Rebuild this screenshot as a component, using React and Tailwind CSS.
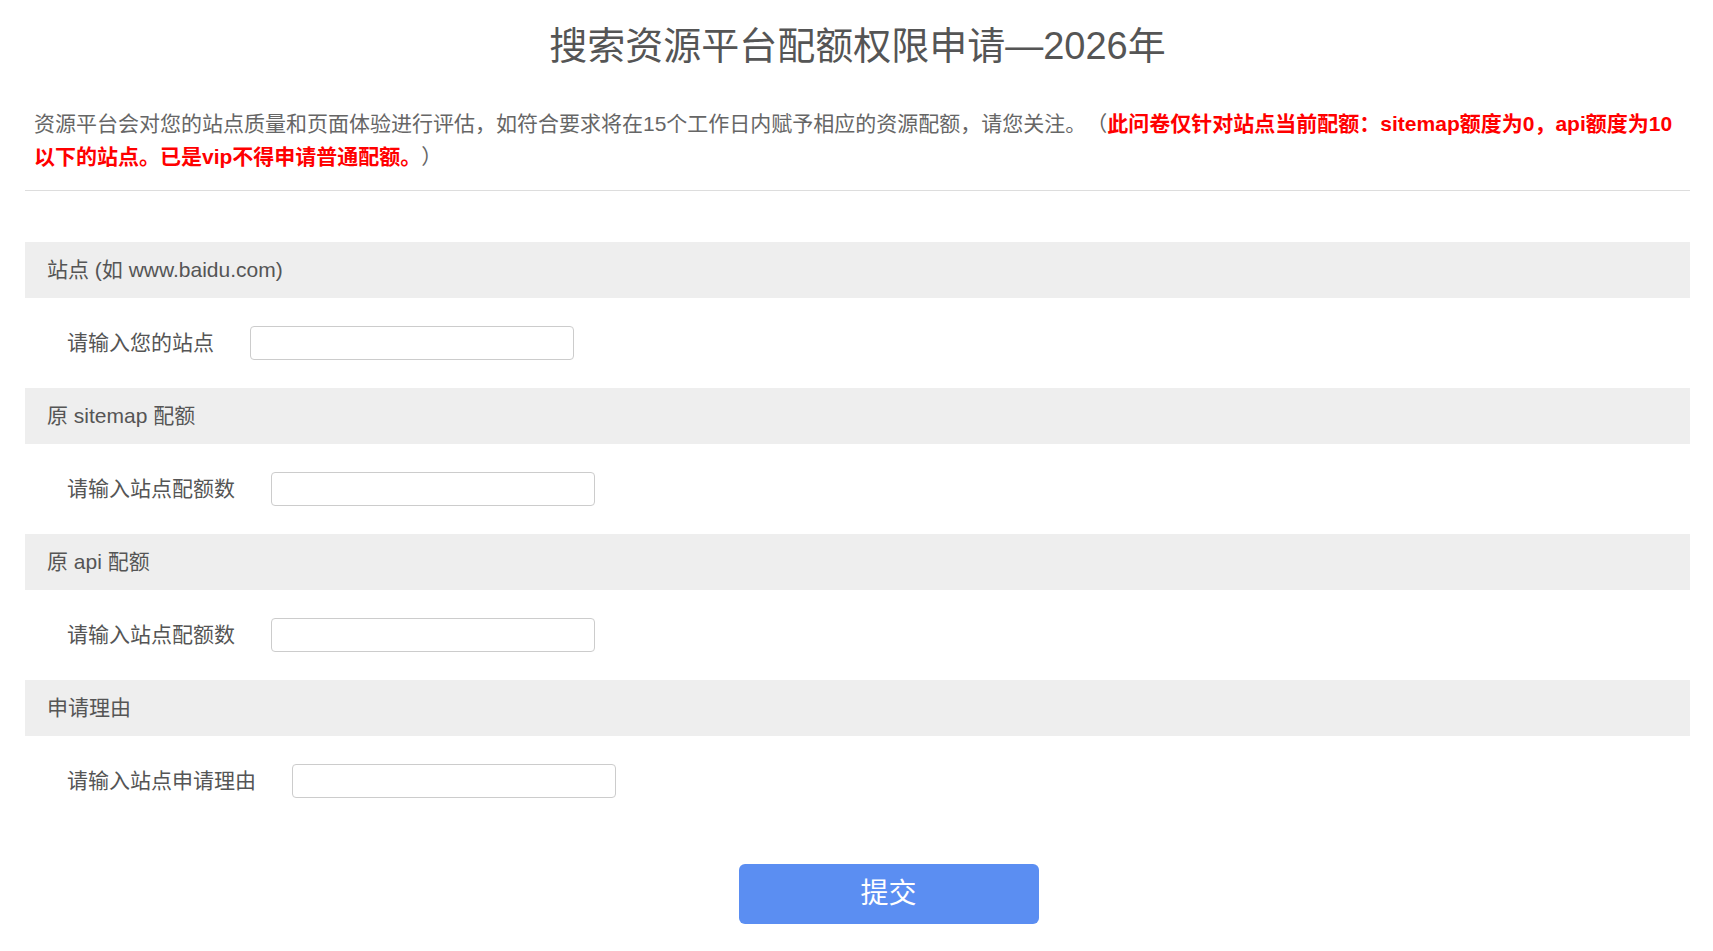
import React, { useState } from 'react';

const FONT = { fontFamily: '"Liberation Sans", "Noto Sans CJK SC", sans-serif' };

const sections = [
  { title: '站点 (如 www.baidu.com)', label: '请输入您的站点', name: 'site' },
  { title: '原 sitemap 配额', label: '请输入站点配额数', name: 'sitemap' },
  { title: '原 api 配额', label: '请输入站点配额数', name: 'api' },
  { title: '申请理由', label: '请输入站点申请理由', name: 'reason' },
];

const App = () => {
  const [formData, setFormData] = useState({ site: '', sitemap: '', api: '', reason: '' });

  const handleInputChange = (e) => {
    const { name, value } = e.target;
    setFormData(prev => ({ ...prev, [name]: value }));
  };

  return (
    <div className="min-h-screen bg-white pl-[25px] pr-[23px] [text-spacing-trim:space-all]" style={FONT}>
      <h1 className="pt-[22px] text-center text-[38px] leading-[48px] font-normal text-[#555]">
        搜索资源平台配额权限申请—2026年
      </h1>

      <div className="mt-[37px] border-b border-[#ddd] px-[9px] pb-[17px]">
        <p className="text-[21px] leading-[33px] text-[#666]">
          资源平台会对您的站点质量和页面体验进行评估，如符合要求将在15个工作日内赋予相应的资源配额，请您关注。（
          <strong className="font-bold text-[#f00]">
            此问卷仅针对站点当前配额：sitemap额度为0，api额度为10以下的站点。已是vip不得申请普通配额。
          </strong>
          ）
        </p>
      </div>

      <form className="mt-[51px]" onSubmit={(e) => e.preventDefault()}>
        {sections.map(section => (
          <div key={section.name}>
            <div className="flex h-[56px] items-center bg-[#eee] px-[22px] text-[21px] text-[#555]">
              {section.title}
            </div>
            <div className="flex h-[90px] items-center gap-[36px] pl-[42px]">
              <label htmlFor={section.name} className="text-[21px] text-[#555]">
                {section.label}
              </label>
              <input
                id={section.name}
                name={section.name}
                type="text"
                value={formData[section.name]}
                onChange={handleInputChange}
                className="h-[34px] w-[324px] rounded-[4px] border border-[#ccc] px-2 text-[16px] outline-none"
              />
            </div>
          </div>
        ))}

        <div className="mt-[38px] flex justify-center pl-[62px]">
          <button
            type="submit"
            className="h-[60px] w-[300px] rounded-[6px] bg-[#5b8ef2] text-[28px] text-white"
          >
            提交
          </button>
        </div>
      </form>
    </div>
  );
};

export default App;
